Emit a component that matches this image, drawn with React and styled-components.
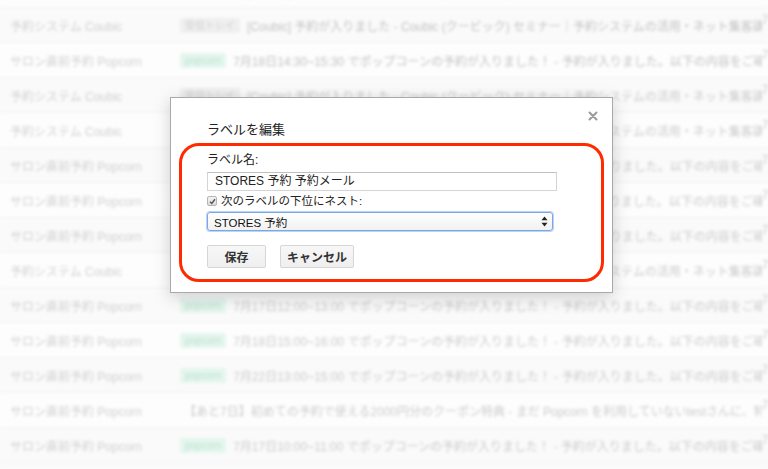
import React from 'react'
import styled, { createGlobalStyle } from 'styled-components'

const GlobalStyle = createGlobalStyle`
  html, body {
    margin: 0;
    padding: 0;
    background: #fbfbfb;
  }
  body {
    font-family: "Liberation Sans", "Noto Sans CJK JP", sans-serif;
  }
`

const Page = styled.div`
  position: relative;
  width: 768px;
  height: 469px;
  overflow: hidden;
  background: #fbfbfb;
`

const MailList = styled.div`
  margin-top: -27px;
  filter: blur(1.4px);
`

const Row = styled.div`
  display: flex;
  align-items: center;
  height: 35px;
  box-sizing: border-box;
  border-bottom: 1px solid #f1f1f1;
  background: ${p => (p.$even ? '#fdfdfd' : '#fafafa')};
  white-space: nowrap;
  font-size: 12px;
`

const Sender = styled.div`
  width: 170px;
  flex: none;
  padding-left: 10px;
  color: #d0d0d0;
`

const Subject = styled.div`
  flex: 1;
  min-width: 0;
  overflow: hidden;
  display: flex;
  align-items: center;
  gap: 7px;
  color: ${p => (p.$dark ? '#c2c2c2' : '#cbcbcb')};
  padding-left: ${p => (p.$plain ? '4px' : '0')};
`

const Badge = styled.span`
  flex: none;
  font-size: 10px;
  line-height: 15px;
  padding: 0 5px;
  border-radius: 2px;
  background: ${p => (p.$green ? '#e4f6ee' : '#efefef')};
  color: ${p => (p.$green ? '#bfe0d0' : '#d2d2d2')};
`

const DateCol = styled.div`
  flex: none;
  width: 6px;
  overflow: hidden;
  color: #cccccc;
  margin-top: -14px;
`

const Dialog = styled.div`
  position: absolute;
  left: 170px;
  top: 97px;
  width: 443px;
  height: 196px;
  box-sizing: border-box;
  background: #fff;
  border: 1px solid #a9a9a9;
  box-shadow: 0 4px 16px rgba(0, 0, 0, 0.18);
  padding: 23px 36px 0 36px;
  color: #222;
`

const Title = styled.div`
  font-size: 13px;
  line-height: 18px;
  color: #222;
`

const Close = styled.button`
  position: absolute;
  right: 13px;
  top: 12px;
  width: 12px;
  height: 12px;
  padding: 0;
  border: 0;
  background: none;
  display: flex;
`

const Field = styled.div`
  display: flex;
  flex-direction: column;
  margin-top: 13px;
`

const FieldLabel = styled.label`
  font-size: 12px;
  line-height: 16px;
  color: #222;
`

const TextInput = styled.div`
  margin-top: 4px;
  width: 350px;
  height: 19px;
  box-sizing: border-box;
  border: 1px solid #d4d4d4;
  border-top-color: #c0c0c0;
  padding: 0 7px;
  font-size: 12px;
  line-height: 17px;
  color: #222;
`

const CheckRow = styled.div`
  display: flex;
  align-items: center;
  gap: 4px;
  margin-top: 3px;
  font-size: 11.5px;
  line-height: 14px;
  color: #222;
`

const CheckBox = styled.span`
  width: 8px;
  height: 8px;
  border: 1px solid #b5b5b5;
  border-radius: 2px;
  background: linear-gradient(#f4f4f4, #dcdcdc);
  display: flex;
  align-items: center;
  justify-content: center;
`

const Select = styled.div`
  margin-top: 4px;
  width: 346px;
  height: 19px;
  box-sizing: border-box;
  border: 1px solid #7aa7e6;
  border-radius: 3px;
  box-shadow: 0 0 0 1px #bcd5f5;
  background: linear-gradient(#ffffff, #f1f1f1);
  display: flex;
  align-items: center;
  justify-content: space-between;
  padding: 0 4px 0 6px;
  font-size: 11.5px;
  color: #111;
`

const Buttons = styled.div`
  display: flex;
  gap: 14px;
  margin-top: 14px;
`

const Button = styled.button`
  height: 23px;
  min-width: ${p => p.$w}px;
  box-sizing: border-box;
  border: 1px solid #d6d6d6;
  border-radius: 2px;
  background: linear-gradient(#f7f7f7, #efefef);
  font-family: "Liberation Sans", "Noto Sans CJK JP", sans-serif;
  font-weight: bold;
  font-size: 12px;
  color: #333;
  padding: 0 6px;
`

const Highlight = styled.div`
  position: absolute;
  left: 8px;
  top: 45px;
  width: 425px;
  height: 139px;
  box-sizing: border-box;
  border: 3px solid #ff2a00;
  border-radius: 20px;
  pointer-events: none;
`

const coubic = 'Coubic (クービック) セミナー｜予約システムの活用・ネット集客講座 を'
const popcornTail = 'でポップコーンの予約が入りました！ - 予約が入りました。以下の内容をご確認く'

const rows = [
  { sender: '予約システム Coubic', badge: '受信トレイ', text: `[Coubic] 予約が入りました - ${coubic}` },
  { sender: '予約システム Coubic', badge: '受信トレイ', dark: true, text: `[Coubic] 予約が入りました - ${coubic}` },
  { sender: 'サロン直前予約 Popcorn', badge: 'popcorn', green: true, dark: true, text: `7月18日14:30~15:30 ${popcornTail}` },
  { sender: '予約システム Coubic', badge: '受信トレイ', text: `[Coubic] 予約が入りました - ${coubic}` },
  { sender: '予約システム Coubic', badge: '受信トレイ', text: `[Coubic] 予約が入りました - ${coubic}` },
  { sender: 'サロン直前予約 Popcorn', badge: 'popcorn', green: true, text: `7月18日14:30~15:30 ${popcornTail}` },
  { sender: 'サロン直前予約 Popcorn', badge: 'popcorn', green: true, text: `7月19日11:00~12:00 ${popcornTail}` },
  { sender: 'サロン直前予約 Popcorn', badge: 'popcorn', green: true, text: `7月20日15:00~16:00 ${popcornTail}` },
  { sender: '予約システム Coubic', badge: '受信トレイ', text: `[Coubic] 予約が入りました - ${coubic}` },
  { sender: 'サロン直前予約 Popcorn', badge: 'popcorn', green: true, text: `7月17日12:00~13:00 ${popcornTail}` },
  { sender: 'サロン直前予約 Popcorn', badge: 'popcorn', green: true, text: `7月18日15:00~16:00 ${popcornTail}` },
  { sender: 'サロン直前予約 Popcorn', badge: 'popcorn', green: true, text: `7月22日13:00~15:00 ${popcornTail}` },
  { sender: 'サロン直前予約 Popcorn', text: '【あと7日】初めての予約で使える2000円分のクーポン特典 - まだ Popcorn を利用していないtestさんに、特別な' },
  { sender: 'サロン直前予約 Popcorn', badge: 'popcorn', green: true, text: `7月17日10:00~11:00 ${popcornTail}` },
]

function CloseIcon() {
  return (
    <svg width="12" height="12" viewBox="0 0 12 12">
      <path d="M2.5 2.5 L9.5 9.5 M9.5 2.5 L2.5 9.5" stroke="#9a9a9a" strokeWidth="2" strokeLinecap="round" />
    </svg>
  )
}

function CheckIcon() {
  return (
    <svg width="7" height="7" viewBox="0 0 8 8">
      <path d="M1.2 4.2 L3.2 6.2 L6.8 1.4" fill="none" stroke="#555" strokeWidth="1.6" />
    </svg>
  )
}

function SelectArrows() {
  return (
    <svg width="7" height="11" viewBox="0 0 7 11">
      <path d="M3.5 0.5 L6.5 4.3 L0.5 4.3 Z" fill="#222" />
      <path d="M3.5 10.5 L6.5 6.7 L0.5 6.7 Z" fill="#222" />
    </svg>
  )
}

export default function App() {
  return (
    <Page>
      <GlobalStyle />
      <MailList>
        {rows.map((r, i) => (
          <Row key={i} $even={i % 2 === 0}>
            <Sender>{r.sender}</Sender>
            <Subject $plain={!r.badge} $dark={r.dark}>
              {r.badge && <Badge $green={r.green}>{r.badge}</Badge>}
              <span>{r.text}</span>
            </Subject>
            <DateCol>7月</DateCol>
          </Row>
        ))}
      </MailList>

      <Dialog>
        <Close aria-label="閉じる">
          <CloseIcon />
        </Close>
        <Title>ラベルを編集</Title>
        <Field>
          <FieldLabel>ラベル名:</FieldLabel>
          <TextInput>STORES 予約 予約メール</TextInput>
          <CheckRow>
            <CheckBox>
              <CheckIcon />
            </CheckBox>
            次のラベルの下位にネスト:
          </CheckRow>
          <Select>
            <span>STORES 予約</span>
            <SelectArrows />
          </Select>
        </Field>
        <Buttons>
          <Button $w={59}>保存</Button>
          <Button $w={73}>キャンセル</Button>
        </Buttons>
        <Highlight />
      </Dialog>
    </Page>
  )
}
